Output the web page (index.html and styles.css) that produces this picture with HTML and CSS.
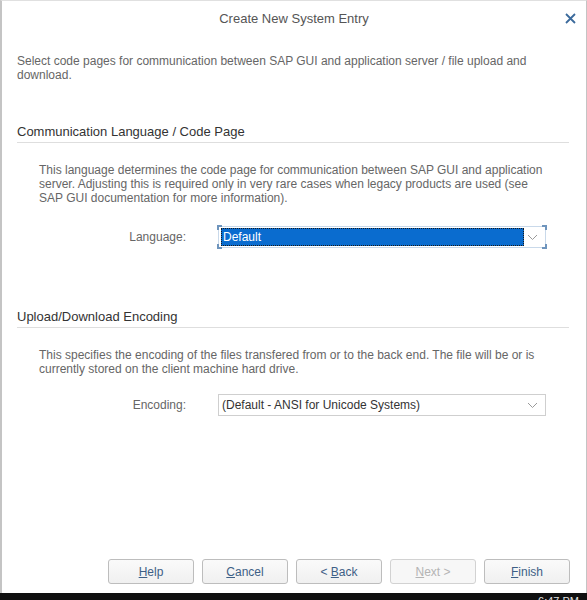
FILE: index.html
```html
<!doctype html>
<html lang="en">
<head>
    <meta charset="UTF-8">
    <title>Create New System Entry</title>
    <link rel="stylesheet" href="styles.css">
</head>
<body>
    <div class="dialog">
        <div class="titlebar">
            <span></span>
            <span class="title">Create New System Entry</span>
            <span class="close">
                <svg width="11" height="11" viewBox="0 0 11 11"><path d="M1 1 L10 10 M10 1 L1 10" stroke="#3b6a9c" stroke-width="1.8" fill="none"/></svg>
            </span>
        </div>
        <p class="intro">Select code pages for communication between SAP GUI and application server / file upload and download.</p>

        <div class="group">
            <h2>Communication Language / Code Page</h2>
            <p class="desc">This language determines the code page for communication between SAP GUI and application server. Adjusting this is required only in very rare cases when legacy products are used (see SAP GUI documentation for more information).</p>
            <div class="field">
                <label>Language:</label>
                <div class="select focused">
                    <span class="value">Default</span>
                    <svg class="arrow" width="11" height="7" viewBox="0 0 11 7"><path d="M1 1 L5.5 5.5 L10 1" stroke="#9a9a9a" fill="none"/></svg>
                    <span class="corner tl"></span><span class="corner tr"></span>
                    <span class="corner bl"></span><span class="corner br"></span>
                </div>
            </div>
        </div>

        <div class="group second">
            <h2>Upload/Download Encoding</h2>
            <p class="desc">This specifies the encoding of the files transfered from or to the back end. The file will be or is currently stored on the client machine hard drive.</p>
            <div class="field">
                <label>Encoding:</label>
                <div class="select">
                    <span class="value">(Default - ANSI for Unicode Systems)</span>
                    <svg class="arrow" width="11" height="7" viewBox="0 0 11 7"><path d="M1 1 L5.5 5.5 L10 1" stroke="#9a9a9a" fill="none"/></svg>
                </div>
            </div>
        </div>

        <div class="buttons">
            <button><u>H</u>elp</button>
            <button><u>C</u>ancel</button>
            <button>&lt; <u>B</u>ack</button>
            <button class="disabled"><u>N</u>ext &gt;</button>
            <button><u>F</u>inish</button>
        </div>
    </div>
    <div class="taskbar"><span>6:47 PM</span></div>
</body>
</html>
```

FILE: styles.css
```css
*{
    margin: 0;
    padding: 0;
    box-sizing: border-box;
}
html,body{
    width: 100%;
    height: 100%;
    overflow: hidden;
}
body{
    background: #fff;
    font-family: "Liberation Sans", Arial, sans-serif;
    font-size: 12px;
    color: #666;
}
.dialog{
    display: flex;
    flex-direction: column;
    width: 587px;
    height: 593px;
    border-left: 2px solid #c4c4c4;
    border-right: 1px solid #c4c4c4;
    border-top: 1px solid #e0e0e0;
    background: #fff;
}
.titlebar{
    display: grid;
    grid-template-columns: 1fr auto 1fr;
    align-items: center;
    height: 35px;
}
.titlebar .title{
    font-size: 13px;
    color: #555;
}
.titlebar .close{
    justify-self: end;
    display: flex;
    margin-right: 10px;
}
.intro{
    margin: 18px 40px 0 15px;
    line-height: 14px;
}
.group{
    margin: 42px 17px 0 15px;
}
.group.second{
    margin-top: 61px;
}
.group h2{
    font-size: 13px;
    font-weight: normal;
    color: #333;
    line-height: 16px;
    padding-bottom: 2px;
    border-bottom: 1px solid #dedede;
}
.desc{
    margin: 20px 24px 0 22px;
    line-height: 14px;
}
.field{
    display: flex;
    align-items: center;
    margin-top: 21px;
}
.group.second .field{
    margin-top: 18px;
}
.field label{
    width: 169px;
    text-align: right;
    color: #666;
}
.select{
    position: relative;
    display: flex;
    align-items: center;
    margin-left: 32px;
    width: 328px;
    height: 22px;
    border: 1px solid #cfcfcf;
    background: #fff;
}
.select .value{
    flex: 1;
    padding-left: 3px;
    color: #333;
}
.select .arrow{
    margin: 0 7px 0 3px;
}
.select.focused{
    border-color: #c9d9ea;
}
.select.focused .value{
    margin: 1px 0 1px 2px;
    height: 18px;
    line-height: 16px;
    padding-left: 1px;
    background: #0a6ccf;
    color: #fff;
    border: 1px dotted #1a1a1a;
}
.corner{
    position: absolute;
    width: 5px;
    height: 5px;
    border: 0 solid #6f95bd;
}
.corner.tl{ top: -2px; left: -2px; border-top-width: 2px; border-left-width: 2px; }
.corner.tr{ top: -2px; right: -2px; border-top-width: 2px; border-right-width: 2px; }
.corner.bl{ bottom: -2px; left: -2px; border-bottom-width: 2px; border-left-width: 2px; }
.corner.br{ bottom: -2px; right: -2px; border-bottom-width: 2px; border-right-width: 2px; }
.buttons{
    display: flex;
    justify-content: flex-end;
    gap: 8px;
    margin-top: auto;
    padding: 0 16px 9px 0;
}
.buttons button{
    width: 86px;
    height: 25px;
    font-family: "Liberation Sans", Arial, sans-serif;
    font-size: 12px;
    color: #3e5f86;
    background: linear-gradient(#fafafa, #f0f0f0);
    border: 1px solid #bdbdbd;
    border-radius: 3px;
}
.buttons button.disabled{
    color: #b4b4b4;
    border-color: #d2d2d2;
    background: #f7f7f7;
}
.taskbar{
    height: 7px;
    background: #101010;
    overflow: hidden;
    text-align: right;
    padding-right: 8px;
}
.taskbar span{
    display: inline-block;
    margin-top: 2px;
    font-size: 11px;
    line-height: 12px;
    color: #e0e0e0;
}
```
